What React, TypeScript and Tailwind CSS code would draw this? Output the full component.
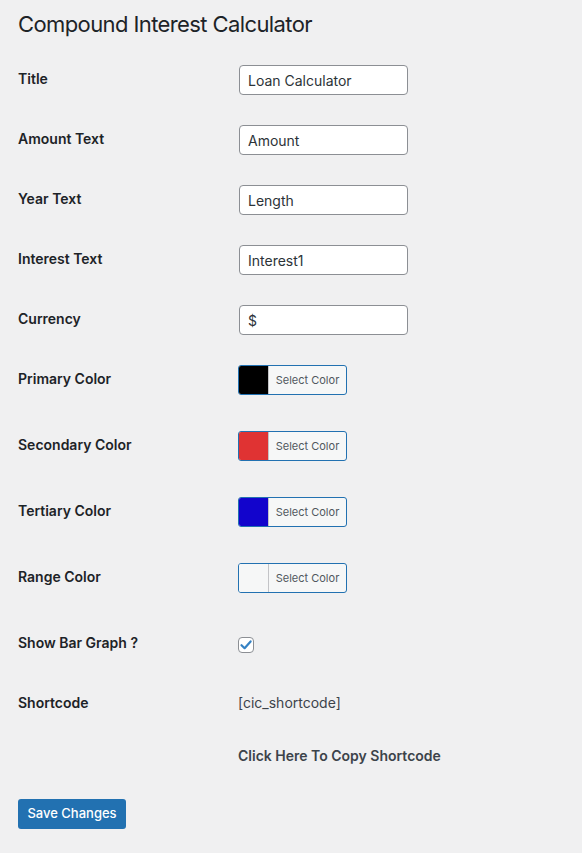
const font = { fontFamily: 'Inter, "Noto Sans", "Liberation Sans", sans-serif' };

interface ColorRowProps {
  label: string;
  color: string;
}

function TextRow({ label, value }: { label: string; value: string }) {
  return (
    <div className="flex h-[60px]">
      <div className="w-[220px] pt-[20px] text-[14px] font-semibold leading-[18px] text-[#1d2327]">{label}</div>
      <div className="pt-[15px]">
        <input
          readOnly
          value={value}
          className="ml-px h-[30px] w-[169px] rounded-[4px] border border-[#8c8f94] bg-white px-[8px] text-[14px] text-[#2c3338] outline-none"
        />
      </div>
    </div>
  );
}

function ColorRow({ label, color }: ColorRowProps) {
  return (
    <div className="flex h-[66px]">
      <div className="w-[220px] pt-[20px] text-[14px] font-semibold leading-[18px] text-[#1d2327]">{label}</div>
      <div className="pt-[15px]">
        <button className="flex h-[30px] w-[109px] overflow-hidden rounded-[3px] border border-[#2271b1] bg-[#f6f7f7]">
          <span className="h-full w-[30px] border-r border-[#c3c4c7]" style={{ backgroundColor: color }} />
          <span className="flex-1 self-center text-center text-[11px] leading-[28px] text-[#50575e]">Select Color</span>
        </button>
      </div>
    </div>
  );
}

export default function App() {
  return (
    <div className="min-h-[853px] bg-[#f0f0f1] px-[18px]" style={font}>
      <h1 className="pt-[9px] pb-[11px] text-[22px] font-normal leading-[30px] tracking-[-0.6px] text-[#1d2327]">
        Compound Interest Calculator
      </h1>

      <TextRow label="Title" value="Loan Calculator" />
      <TextRow label="Amount Text" value="Amount" />
      <TextRow label="Year Text" value="Length" />
      <TextRow label="Interest Text" value="Interest1" />
      <TextRow label="Currency" value="$" />

      <ColorRow label="Primary Color" color="#000000" />
      <ColorRow label="Secondary Color" color="#e03333" />
      <ColorRow label="Tertiary Color" color="#1204cc" />
      <ColorRow label="Range Color" color="#f6f7f7" />

      <div className="flex h-[60px]">
        <div className="w-[220px] pt-[20px] text-[14px] font-semibold leading-[18px] text-[#1d2327]">Show Bar Graph ?</div>
        <div className="pt-[23px]">
          <span className="flex h-[16px] w-[16px] items-center justify-center rounded-[4px] border border-[#8c8f94] bg-white">
            <svg width="14" height="14" viewBox="0 0 14 14">
              <path d="M2.5 7.2 L5.6 10.2 L11.6 3.4" fill="none" stroke="#3582c4" strokeWidth="2.2" strokeLinecap="round" strokeLinejoin="round" />
            </svg>
          </span>
        </div>
      </div>

      <div className="flex h-[58px]">
        <div className="w-[220px] pt-[20px] text-[14px] font-semibold leading-[18px] text-[#1d2327]">Shortcode</div>
        <div className="pt-[20px] text-[14px] leading-[18px] text-[#3c434a]">[cic_shortcode]</div>
      </div>

      <div className="flex h-[53px]">
        <div className="w-[220px]" />
        <div className="pt-[15px] text-[14px] font-semibold leading-[18px] text-[#3c434a]">Click Here To Copy Shortcode</div>
      </div>

      <div className="pt-[14px]">
        <button className="h-[30px] w-[108px] rounded-[3px] bg-[#2271b1] text-[13px] font-medium text-white">
          Save Changes
        </button>
      </div>
    </div>
  );
}
